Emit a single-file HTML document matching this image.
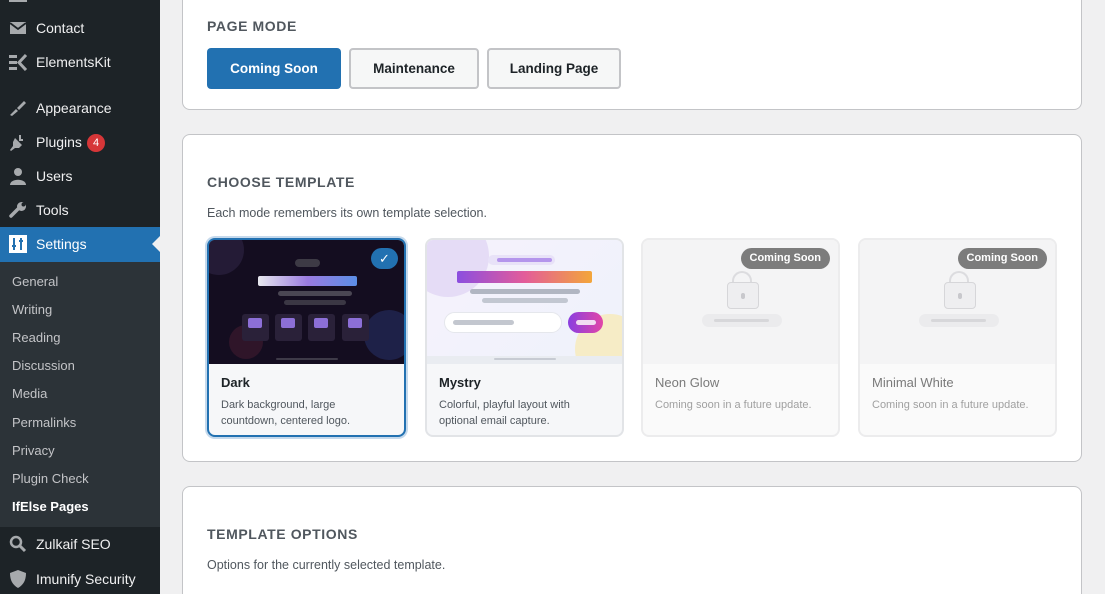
<!DOCTYPE html>
<html style="overflow:hidden;width:1105px;height:594px"><head><meta charset="utf-8"><style>
*{box-sizing:border-box;margin:0;padding:0}
body{width:1105px;height:594px;overflow:hidden;background:#f0f0f1;font-family:"Liberation Sans",sans-serif;position:relative}
.sb{position:absolute;left:0;top:0;width:160px;height:594px;background:#1d2327}
.sub{position:absolute;left:0;top:262px;width:160px;height:265px;background:#2c3338}
.it{position:absolute;left:36px;color:#f0f0f1;font-size:14px;line-height:20px}
.ic{position:absolute;left:9px;width:18px;height:18px;fill:#a7aaad}
.si{position:absolute;left:12px;color:#c3c4c7;font-size:13px;line-height:18px}
.card{position:absolute;left:182px;width:900px;background:#fff;border:1px solid #c3c4c7;border-radius:8px}
.h{position:absolute;left:207px;font-size:14px;font-weight:bold;color:#50575e;letter-spacing:.6px}
.p{position:absolute;left:207px;font-size:12.5px;color:#50575e}
.btn{position:absolute;top:48px;height:41px;border-radius:4px;font-size:13.5px;font-weight:bold;line-height:41px;text-align:center}
.tc{position:absolute;top:238px;width:199px;height:199px;border:2px solid #e2e4e7;border-radius:8px;overflow:hidden;background:#f6f7f9}
.pv{position:absolute;left:0;top:0;right:0;height:124px}
.tn{position:absolute;left:12px;top:135px;font-size:13px;color:#1d2327;font-weight:bold}
.td{position:absolute;left:12px;top:157px;font-size:11px;line-height:16px;color:#50575e;width:160px}
.bar{position:absolute;border-radius:4px}
.cs{position:absolute;right:8px;top:8px;background:#7c7c7c;color:#fff;font-size:11px;font-weight:bold;border-radius:11px;padding:0 9px;line-height:21px}
</style></head><body>
<div class="sb">
<div style="position:absolute;left:9px;top:-6px;width:18px;height:8px;border:2px solid #a7aaad;border-top:none"></div>
<svg class="ic" style="top:19px" viewBox="0 0 18 18"><rect x="1" y="3" width="16" height="12" fill="#a7aaad"/><path d="M1 4l8 6 8-6" stroke="#1d2327" stroke-width="1.8" fill="none"/></svg>
<div class="it" style="top:18px">Contact</div>
<svg class="ic" style="top:53px" viewBox="0 0 18 18"><rect x="0" y="2" width="8" height="3"/><rect x="0" y="8" width="8" height="3"/><rect x="0" y="14" width="8" height="3"/><path d="M17 2l-7 7.5 7 7.5" stroke="#a7aaad" stroke-width="3" fill="none"/></svg>
<div class="it" style="top:52px">ElementsKit</div>
<svg class="ic" style="top:99px" viewBox="0 0 18 18"><path d="M8 9l7-7 2 2-7 7zM7 10l2 2-6 5-2-1z"/></svg>
<div class="it" style="top:98px">Appearance</div>
<svg class="ic" style="top:133px" viewBox="0 0 18 18"><path d="M6 5l7 7-3 3-4 0-4 3-1-1 3-4 0-4zM10 2l2 0 0 4-2 0zM14 6l0 2 -4 0 0-2z"/></svg>
<div class="it" style="top:132px">Plugins</div>
<div style="position:absolute;left:87px;top:134px;width:18px;height:18px;border-radius:9px;background:#d63638;color:#fff;font-size:11px;text-align:center;line-height:18px">4</div>
<svg class="ic" style="top:167px" viewBox="0 0 18 18"><circle cx="9" cy="5" r="4"/><path d="M1 18c0-7 16-7 16 0z"/></svg>
<div class="it" style="top:166px">Users</div>
<svg class="ic" style="top:201px" viewBox="0 0 18 18"><path d="M2 15l8-8" stroke="#a7aaad" stroke-width="3.5" stroke-linecap="round"/><circle cx="12.5" cy="5.5" r="4.5"/><circle cx="14.5" cy="3.5" r="2" fill="#1d2327"/></svg>
<div class="it" style="top:200px">Tools</div>
<div style="position:absolute;left:0;top:227px;width:160px;height:35px;background:#2271b1"></div>
<div style="position:absolute;left:152px;top:236px;border:8px solid transparent;border-right-color:#f0f0f1;border-left:none"></div>
<svg class="ic" style="top:235px" viewBox="0 0 18 18"><rect x="0" y="0" width="18" height="18" fill="#fff"/><path d="M5 3v12M12 3v12M3 11h4M10 6h4" stroke="#2271b1" stroke-width="2"/></svg>
<div class="it" style="top:234px;color:#fff">Settings</div>
<div class="sub"></div>
<div class="si" style="top:273px">General</div>
<div class="si" style="top:301px">Writing</div>
<div class="si" style="top:329px">Reading</div>
<div class="si" style="top:357px">Discussion</div>
<div class="si" style="top:385px">Media</div>
<div class="si" style="top:414px">Permalinks</div>
<div class="si" style="top:442px">Privacy</div>
<div class="si" style="top:470px">Plugin Check</div>
<div class="si" style="top:498px;color:#fff;font-weight:bold">IfElse Pages</div>
<svg class="ic" style="top:535px" viewBox="0 0 18 18"><circle cx="7" cy="7" r="5" stroke="#a7aaad" stroke-width="2.5" fill="none"/><path d="M11 11l5 5" stroke="#a7aaad" stroke-width="3"/></svg>
<div class="it" style="top:534px">Zulkaif SEO</div>
<svg class="ic" style="top:570px" viewBox="0 0 18 18"><path d="M9 0l8 3c0 8-3 12-8 15C4 15 1 11 1 3z"/></svg>
<div class="it" style="top:569px">Imunify Security</div>
</div>

<div class="card" style="top:-10px;height:120px"></div>
<div class="h" style="top:18px">PAGE MODE</div>
<div class="btn" style="left:207px;width:134px;background:#2271b1;color:#fff">Coming Soon</div>
<div class="btn" style="left:349px;width:130px;background:#f6f7f7;border:2px solid #c3c4c7;color:#1d2327;line-height:37px">Maintenance</div>
<div class="btn" style="left:487px;width:134px;background:#f6f7f7;border:2px solid #c3c4c7;color:#1d2327;line-height:37px">Landing Page</div>

<div class="card" style="top:134px;height:328px"></div>
<div class="h" style="top:174px">CHOOSE TEMPLATE</div>
<div class="p" style="top:206px">Each mode remembers its own template selection.</div>

<div class="tc" style="left:207px;border-color:#2271b1;box-shadow:0 0 0 2px #c5d9ec">
 <div class="pv" style="background:#140d20;overflow:hidden">
  <div style="position:absolute;left:-15px;top:-15px;width:50px;height:50px;border-radius:50%;background:#241b36"></div>
  <div style="position:absolute;left:155px;top:70px;width:50px;height:50px;border-radius:50%;background:#1e2148"></div>
  <div style="position:absolute;left:20px;top:85px;width:34px;height:34px;border-radius:50%;background:#2f1529"></div>
  <div class="bar" style="left:86px;top:19px;width:25px;height:8px;background:#3d3a45"></div>
  <div class="bar" style="left:49px;top:36px;width:99px;height:10px;border-radius:2px;background:linear-gradient(90deg,#e8e8ee,#9a7be0,#5b8ee6)"></div>
  <div class="bar" style="left:69px;top:51px;width:74px;height:5px;background:#4a4653"></div>
  <div class="bar" style="left:75px;top:60px;width:62px;height:5px;background:#3b3744"></div>
  <div style="position:absolute;left:33px;top:74px;width:27px;height:27px;border-radius:3px;background:#2a2139"></div>
  <div style="position:absolute;left:66px;top:74px;width:27px;height:27px;border-radius:3px;background:#2a2139"></div>
  <div style="position:absolute;left:99px;top:74px;width:27px;height:27px;border-radius:3px;background:#2a2139"></div>
  <div style="position:absolute;left:133px;top:74px;width:27px;height:27px;border-radius:3px;background:#2a2139"></div>
  <div style="position:absolute;left:39px;top:78px;width:14px;height:10px;border-radius:2px;background:#8c6fd6"></div>
  <div style="position:absolute;left:72px;top:78px;width:14px;height:10px;border-radius:2px;background:#8c6fd6"></div>
  <div style="position:absolute;left:105px;top:78px;width:14px;height:10px;border-radius:2px;background:#8c6fd6"></div>
  <div style="position:absolute;left:139px;top:78px;width:14px;height:10px;border-radius:2px;background:#8c6fd6"></div>
  <div class="bar" style="left:67px;top:118px;width:62px;height:2px;background:#3e3a48"></div>
  <div style="position:absolute;left:162px;top:8px;width:27px;height:21px;border-radius:11px;background:#2271b1;color:#fff;font-size:13px;text-align:center;line-height:21px">✓</div>
 </div>
 <div class="tn" style="top:135px">Dark</div>
 <div class="td">Dark background, large countdown, centered logo.</div>
</div>

<div class="tc" style="left:425px">
 <div class="pv" style="background:linear-gradient(135deg,#f6f2fc,#eef2fb);overflow:hidden">
  <div style="position:absolute;left:-20px;top:-25px;width:82px;height:82px;border-radius:50%;background:#e5dcf6"></div>
  <div style="position:absolute;left:148px;top:74px;width:70px;height:70px;border-radius:50%;background:#f6ecc6"></div>
  <div class="bar" style="left:61px;top:15px;width:67px;height:10px;border-radius:5px;background:#e8e2f8"></div>
  <div class="bar" style="left:70px;top:18px;width:55px;height:4px;background:#b495ec"></div>
  <div class="bar" style="left:30px;top:31px;width:135px;height:12px;border-radius:2px;background:linear-gradient(90deg,#8b4ee0,#e35c9a,#f3a63a)"></div>
  <div class="bar" style="left:43px;top:49px;width:110px;height:5px;background:#b1b6c2"></div>
  <div class="bar" style="left:55px;top:58px;width:86px;height:5px;background:#c2c7d1"></div>
  <div style="position:absolute;left:17px;top:72px;width:118px;height:21px;border-radius:11px;background:#fff;border:1px solid #e5e7ec"></div>
  <div class="bar" style="left:26px;top:80px;width:61px;height:5px;background:#c3c7cf"></div>
  <div style="position:absolute;left:141px;top:72px;width:35px;height:21px;border-radius:11px;background:linear-gradient(90deg,#8a3fe0,#e245a7)"></div>
  <div class="bar" style="left:149px;top:80px;width:20px;height:5px;background:#f2dcf2"></div>
  <div style="position:absolute;left:0;top:116px;width:200px;height:8px;background:#e9ecf1"></div>
  <div class="bar" style="left:67px;top:118px;width:62px;height:2px;background:#c7cbd3"></div>
 </div>
 <div class="tn">Mystry</div>
 <div class="td">Colorful, playful layout with optional email capture.</div>
</div>

<div class="tc" style="left:641px;border-color:#ececed;background:#fafafa">
 <div class="pv" style="background:#f4f4f5">
  <div style="position:absolute;left:84px;top:31px;width:30px;height:40px">
   <div style="position:absolute;left:5px;top:0;width:20px;height:20px;border:2px solid #dcdcdf;border-radius:10px 10px 0 0;border-bottom:none"></div>
   <div style="position:absolute;left:0;top:11px;width:32px;height:27px;border:1.5px solid #d6d6d9;border-radius:4px;background:#eeeef0"></div>
   <div style="position:absolute;left:14px;top:22px;width:4px;height:6px;border-radius:2px;background:#c8c8cc"></div>
  </div>
  <div style="position:absolute;left:59px;top:74px;width:80px;height:13px;border-radius:7px;background:#ebebed"></div>
  <div class="bar" style="left:71px;top:79px;width:55px;height:3px;background:#d7d7da"></div>
  <div class="cs">Coming Soon</div>
 </div>
 <div class="tn" style="color:#7a7a7a;font-weight:normal">Neon Glow</div>
 <div class="td" style="color:#a0a0a0;width:185px">Coming soon in a future update.</div>
</div>

<div class="tc" style="left:858px;border-color:#ececed;background:#fafafa">
 <div class="pv" style="background:#f4f4f5">
  <div style="position:absolute;left:84px;top:31px;width:30px;height:40px">
   <div style="position:absolute;left:5px;top:0;width:20px;height:20px;border:2px solid #dcdcdf;border-radius:10px 10px 0 0;border-bottom:none"></div>
   <div style="position:absolute;left:0;top:11px;width:32px;height:27px;border:1.5px solid #d6d6d9;border-radius:4px;background:#eeeef0"></div>
   <div style="position:absolute;left:14px;top:22px;width:4px;height:6px;border-radius:2px;background:#c8c8cc"></div>
  </div>
  <div style="position:absolute;left:59px;top:74px;width:80px;height:13px;border-radius:7px;background:#ebebed"></div>
  <div class="bar" style="left:71px;top:79px;width:55px;height:3px;background:#d7d7da"></div>
  <div class="cs">Coming Soon</div>
 </div>
 <div class="tn" style="color:#7a7a7a;font-weight:normal">Minimal White</div>
 <div class="td" style="color:#a0a0a0;width:185px">Coming soon in a future update.</div>
</div>

<div class="card" style="top:486px;height:120px"></div>
<div class="h" style="top:526px">TEMPLATE OPTIONS</div>
<div class="p" style="top:558px">Options for the currently selected template.</div>
</body></html>
